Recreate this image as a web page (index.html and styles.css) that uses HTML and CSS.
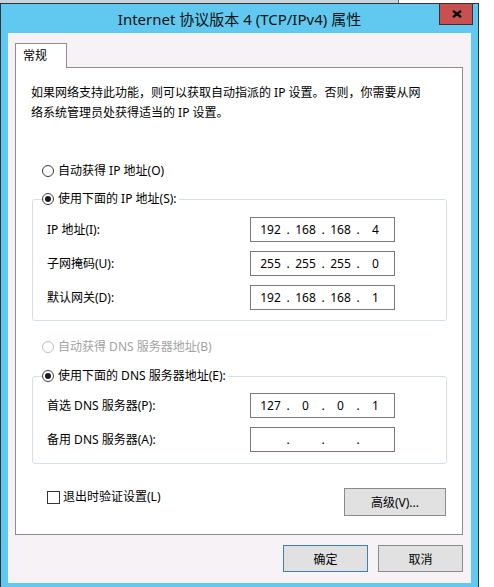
FILE: index.html
```html
<!DOCTYPE html>
<html lang="zh-CN">
<head>
<meta charset="utf-8">
<title>Internet 协议版本 4 (TCP/IPv4) 属性</title>
<link rel="stylesheet" href="styles.css">
</head>
<body>
<div class="backdrop"><div class="backdrop-bar"></div></div>
<div class="window">
  <div class="titlebar">
    <div class="title">Internet 协议版本 4 (TCP/IPv4) 属性</div>
    <button class="close" aria-label="关闭">
      <svg width="10" height="8" viewBox="0 0 10 8"><path d="M1 0.8 L9 7.2 M9 0.8 L1 7.2" stroke="#000" stroke-width="2.3" fill="none"/></svg>
    </button>
  </div>
  <div class="client">
    <div class="tabs"><div class="tab">常规</div></div>
    <div class="panel">
      <p class="intro">如果网络支持此功能，则可以获取自动指派的 IP 设置。否则，你需要从网<br>络系统管理员处获得适当的 IP 设置。</p>

      <div class="radio first"><span class="dot"></span><span>自动获得 IP 地址(O)</span></div>

      <fieldset class="group g-ip">
        <legend class="radio checked"><span class="dot"></span><span>使用下面的 IP 地址(S):</span></legend>
        <div class="rows">
          <div class="row"><span>IP 地址(I):</span>
            <div class="ipbox"><span class="seg">192</span><span class="sep">.</span><span class="seg">168</span><span class="sep">.</span><span class="seg">168</span><span class="sep">.</span><span class="seg">4</span></div></div>
          <div class="row"><span>子网掩码(U):</span>
            <div class="ipbox"><span class="seg">255</span><span class="sep">.</span><span class="seg">255</span><span class="sep">.</span><span class="seg">255</span><span class="sep">.</span><span class="seg">0</span></div></div>
          <div class="row"><span>默认网关(D):</span>
            <div class="ipbox"><span class="seg">192</span><span class="sep">.</span><span class="seg">168</span><span class="sep">.</span><span class="seg">168</span><span class="sep">.</span><span class="seg">1</span></div></div>
        </div>
      </fieldset>

      <div class="radio disabled dns-auto"><span class="dot"></span><span>自动获得 DNS 服务器地址(B)</span></div>

      <fieldset class="group g-dns">
        <legend class="radio checked"><span class="dot"></span><span>使用下面的 DNS 服务器地址(E):</span></legend>
        <div class="rows">
          <div class="row"><span>首选 DNS 服务器(P):</span>
            <div class="ipbox"><span class="seg">127</span><span class="sep">.</span><span class="seg">0</span><span class="sep">.</span><span class="seg">0</span><span class="sep">.</span><span class="seg">1</span></div></div>
          <div class="row"><span>备用 DNS 服务器(A):</span>
            <div class="ipbox"><span class="seg"></span><span class="sep">.</span><span class="seg"></span><span class="sep">.</span><span class="seg"></span><span class="sep">.</span><span class="seg"></span></div></div>
        </div>
      </fieldset>

      <div class="bottom-row">
        <div class="check"><span class="box"></span><span>退出时验证设置(L)</span></div>
        <button class="btn advanced">高级(V)...</button>
      </div>
    </div>
    <div class="actions">
      <button class="btn default">确定</button>
      <button class="btn">取消</button>
    </div>
  </div>
</div>
</body>
</html>
```

FILE: styles.css
```css
html, body {
  margin: 0;
  padding: 0;
  overflow: hidden;
  background: #ffffff;
}
body {
  font-family: "Noto Sans", "Noto Sans CJK SC", sans-serif;
  font-size: 12px;
  line-height: 20px;
  color: #000;
}
.backdrop {
  height: 3px;
  background: #ffffff;
}
.backdrop-bar {
  width: 398px;
  height: 3px;
  background: #c9d3db;
  border-right: 1px solid #5a6670;
}
.window {
  width: 479px;
  box-sizing: border-box;
  border: 1px solid #2f3336;
  border-bottom: none;
  background: #61c9ef;
  padding: 0 6px 7px 6px;
}
.titlebar {
  position: relative;
  height: 29px;
  margin: 0 -6px;
}
.title {
  text-align: center;
  font-size: 15px;
  line-height: 29px;
  padding-top: 1px;
  color: #111;
}
.close {
  position: absolute;
  top: 0;
  right: 5px;
  width: 34px;
  height: 21px;
  box-sizing: border-box;
  border: 1px solid #3a3030;
  border-top: none;
  background: #c75050;
  padding: 0;
  display: flex;
  align-items: center;
  justify-content: center;
}
.close svg { display: block; margin-left: 1px; }

.client {
  background: #f6f2f6;
  height: 550px;
  box-sizing: border-box;
  padding: 10px 8px 0 7px;
  margin: 0 1px;
}
.tabs {
  display: flex;
}
.tab {
  position: relative;
  z-index: 1;
  width: 52px;
  height: 25px;
  box-sizing: border-box;
  border: 1px solid #8d8d8d;
  border-bottom: none;
  background: #ffffff;
  padding-left: 7px;
  line-height: 23px;
  margin-bottom: -1px;
}
.panel {
  height: 468px;
  box-sizing: border-box;
  border: 1px solid #8d8d8d;
  background: #ffffff;
  padding: 0 15px 0 15px;
}
.intro {
  margin: 15px 0 0 0;
  line-height: 20px;
}

.radio {
  display: flex;
  align-items: center;
  height: 20px;
  line-height: 20px;
}
.radio .dot {
  width: 12px;
  height: 12px;
  box-sizing: border-box;
  border: 1px solid #3c3c3c;
  border-radius: 50%;
  background: #fff;
  margin-right: 4px;
  display: flex;
  align-items: center;
  justify-content: center;
  flex: none;
}
.radio.checked .dot::after {
  content: "";
  width: 6px;
  height: 6px;
  border-radius: 50%;
  background: #1c1c1c;
}
.radio.first {
  margin: 38px 0 0 11px;
}
.radio.disabled {
  color: #a2a2a2;
}
.radio.disabled .dot {
  border-color: #bdbdbd;
}
.dns-auto {
  margin: 16px 0 0 11px;
}

.group {
  margin: 0 0 0 1px;
  border: 1px solid #d6dfe6;
  border-radius: 3px;
  padding: 0 0 0 9px;
  min-inline-size: 0;
}
.group legend {
  padding: 0 2px 0 0;
}
.g-ip {
  margin-top: 8px;
  padding-top: 8px;
  padding-bottom: 10px;
}
.g-dns {
  margin-top: 9px;
  padding-top: 7px;
  padding-bottom: 11px;
}
.rows {
  display: grid;
  row-gap: 9px;
  padding-left: 5px;
}
.row {
  display: grid;
  grid-template-columns: 203px 145px;
  align-items: center;
  height: 25px;
}
.ipbox {
  height: 25px;
  box-sizing: border-box;
  border: 1px solid #7a7a7a;
  background: #fff;
  display: flex;
  align-items: center;
  padding-left: 5px;
}
.seg {
  width: 29px;
  text-align: center;
}
.sep {
  width: 6px;
  text-align: center;
}

.bottom-row {
  display: flex;
  justify-content: space-between;
  align-items: flex-start;
  margin: 24px 1px 0 16px;
}
.check {
  display: flex;
  align-items: center;
  line-height: 20px;
  margin-top: -1px;
}
.check .box {
  width: 13px;
  height: 13px;
  box-sizing: border-box;
  border: 1px solid #333;
  background: #fff;
  margin-right: 3px;
}
.btn {
  font-family: inherit;
  font-size: 12px;
  color: #000;
  background: #e1e1e1;
  border: 1px solid #8a8a8a;
  padding: 0;
  height: 27px;
  width: 85px;
}
.btn.advanced {
  width: 102px;
  height: 28px;
}
.btn.default {
  border-color: #3c7fb1;
}
.actions {
  display: flex;
  justify-content: flex-end;
  gap: 10px;
  margin-top: 10px;
}
```
